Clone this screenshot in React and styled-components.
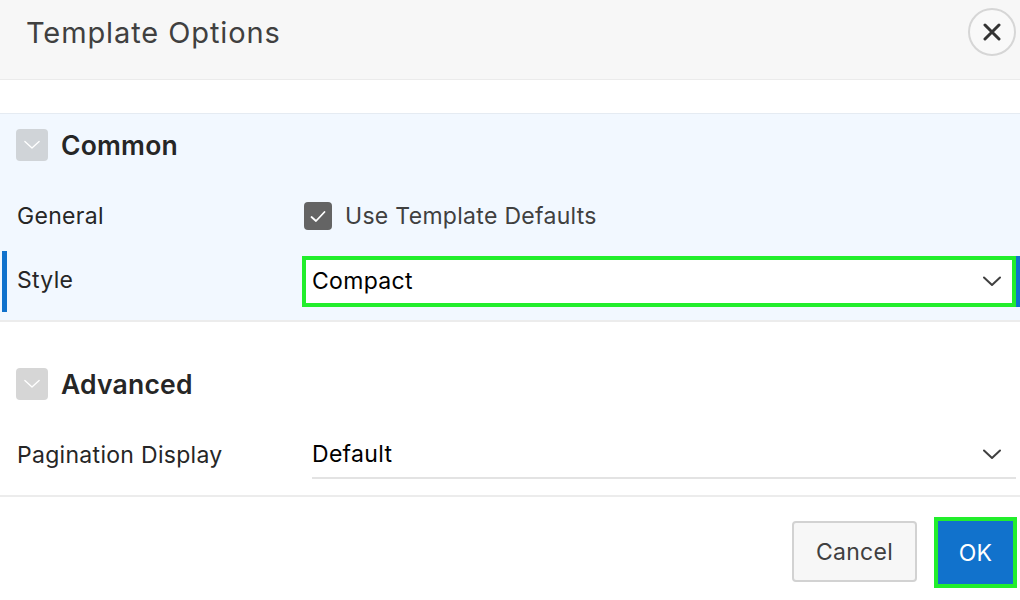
import React from "react";
import styled, { createGlobalStyle } from "styled-components";

const Global = createGlobalStyle`
  html, body {
    margin: 0;
    padding: 0;
    background: #ffffff;
    font-family: Inter, "Noto Sans", "Liberation Sans", sans-serif;
  }
  * { box-sizing: border-box; }
`;

const Dialog = styled.div`
  width: 1020px;
  height: 600px;
  display: flex;
  flex-direction: column;
  background: #fff;
  overflow: hidden;
`;

const Header = styled.div`
  height: 80px;
  flex: none;
  display: flex;
  align-items: flex-start;
  justify-content: space-between;
  padding: 8px 4px 0 26px;
  background: #f7f7f7;
  border-bottom: 1px solid #ebebeb;
`;

const Title = styled.h1`
  margin: 0;
  height: 48px;
  display: flex;
  align-items: center;
  font-size: 29px;
  font-weight: 400;
  color: #404040;
  letter-spacing: 0.9px;
`;

const CloseButton = styled.button`
  width: 48px;
  height: 48px;
  border-radius: 50%;
  border: 2px solid #d6d6d6;
  background: #f9f9f9;
  display: flex;
  align-items: center;
  justify-content: center;
  padding: 0;
  cursor: pointer;
`;

const Spacer = styled.div`
  height: 33px;
  flex: none;
`;

const Section = styled.section`
  flex: none;
  padding: ${(p) => (p.$open ? "15px 4px 8px 0" : "46px 4px 8px 0")};
  background: ${(p) => (p.$open ? "#f2f8ff" : "#fff")};
  border-top: ${(p) => (p.$open ? "1px solid #e5ebf2" : "none")};
  border-bottom: 2px solid #ececec;
`;

const SectionHead = styled.div`
  height: 32px;
  display: flex;
  align-items: center;
  gap: 13px;
  padding-left: 16px;
  margin-bottom: 23px;
`;

const Toggle = styled.span`
  width: 32px;
  height: 32px;
  border-radius: 4px;
  background: ${(p) => (p.$tint ? "#d0d4d8" : "#d6d6d6")};
  display: flex;
  align-items: center;
  justify-content: center;
`;

const SectionTitle = styled.h2`
  margin: 0;
  font-size: 26.5px;
  font-weight: 600;
  color: #262626;
  letter-spacing: 0.2px;
`;

const Row = styled.div`
  height: 64px;
  display: grid;
  grid-template-columns: 302px 1fr;
  align-items: center;
  background: ${(p) =>
    p.$active
      ? "linear-gradient(to right, transparent 2px, #1172cc 2px, #1172cc 7px, transparent 7px) 0 3px / 100% 61px no-repeat"
      : "none"};
`;

const Label = styled.label`
  padding-left: 17px;
  font-size: 23px;
  letter-spacing: 0.3px;
  color: #262626;
`;

const CheckLine = styled.div`
  display: flex;
  align-items: center;
  gap: 13px;
  padding-left: 2px;
  font-size: 23px;
  letter-spacing: 0.3px;
  color: #404040;
`;

const CheckBox = styled.span`
  width: 28px;
  height: 28px;
  border-radius: 4px;
  background: #646464;
  display: flex;
  align-items: center;
  justify-content: center;
`;

const Select = styled.div`
  height: ${(p) => (p.$focus ? "51px" : "48px")};
  display: flex;
  align-items: center;
  justify-content: space-between;
  padding: ${(p) => (p.$focus ? "0 11px 0 6px" : "0 15px 0 0")};
  margin-left: ${(p) => (p.$focus ? "0" : "10px")};
  background: #fff;
  font-size: 23px;
  letter-spacing: 0.3px;
  color: #000;
  border: ${(p) => (p.$focus ? "4px solid #22ee2c" : "none")};
  border-bottom: ${(p) => (p.$focus ? "4px solid #22ee2c" : "2px solid #e3e3e3")};
  box-shadow: ${(p) => (p.$focus ? "5px 0 0 0 #1172cc" : "none")};
  margin-top: ${(p) => (p.$focus ? "2px" : "0")};
`;

const Footer = styled.div`
  flex: 1;
  display: flex;
  justify-content: flex-end;
  align-items: flex-start;
  gap: 21px;
  padding: 20px 3px 0 0;
`;

const Button = styled.button`
  font-family: inherit;
  font-size: 23px;
  letter-spacing: 0.3px;
  border-radius: 4px;
  cursor: pointer;
  color: ${(p) => (p.$primary ? "#fff" : "#404040")};
  background: ${(p) => (p.$primary ? "#1172cc" : "#f7f7f7")};
  border: ${(p) => (p.$primary ? "none" : "2px solid #d2d2d2")};
  width: ${(p) => (p.$primary ? "75px" : "125px")};
  height: ${(p) => (p.$primary ? "63px" : "61px")};
  margin-top: 4px;
  outline: ${(p) => (p.$primary ? "4px solid #22ee2c" : "none")};
  outline-offset: 0;
  ${(p) => p.$primary && "border-radius: 0; margin-right: 4px;"}
`;

const Chevron = ({ color = "#404040", w = 18, sw = 2 }) => (
  <svg width={w} height={w / 2 + 2} viewBox="0 0 18 11" fill="none">
    <path d="M1 1.5 L9 9 L17 1.5" stroke={color} strokeWidth={sw} strokeLinecap="round" strokeLinejoin="round" />
  </svg>
);

const Check = () => (
  <svg width="16" height="13" viewBox="0 0 16 13" fill="none">
    <path d="M1.5 7 L6 11 L14.5 2" stroke="#fff" strokeWidth="1.8" strokeLinecap="round" strokeLinejoin="round" />
  </svg>
);

const Close = () => (
  <svg width="18" height="18" viewBox="0 0 18 18" fill="none">
    <path d="M2 2 L16 16 M16 2 L2 16" stroke="#333" strokeWidth="3" strokeLinecap="round" />
  </svg>
);

export default function App() {
  return (
    <Dialog>
      <Global />
      <Header>
        <Title>Template Options</Title>
        <CloseButton aria-label="Close">
          <Close />
        </CloseButton>
      </Header>
      <Spacer />
      <Section $open>
        <SectionHead>
          <Toggle $tint>
            <Chevron color="#fff" w={16} sw={1.5} />
          </Toggle>
          <SectionTitle>Common</SectionTitle>
        </SectionHead>
        <Row>
          <Label>General</Label>
          <CheckLine>
            <CheckBox>
              <Check />
            </CheckBox>
            Use Template Defaults
          </CheckLine>
        </Row>
        <Row $active>
          <Label>Style</Label>
          <Select $focus>
            Compact
            <Chevron />
          </Select>
        </Row>
      </Section>
      <Section>
        <SectionHead>
          <Toggle>
            <Chevron color="#fff" w={16} sw={1.5} />
          </Toggle>
          <SectionTitle>Advanced</SectionTitle>
        </SectionHead>
        <Row>
          <Label>Pagination Display</Label>
          <Select>
            Default
            <Chevron />
          </Select>
        </Row>
      </Section>
      <Footer>
        <Button>Cancel</Button>
        <Button $primary>OK</Button>
      </Footer>
    </Dialog>
  );
}
